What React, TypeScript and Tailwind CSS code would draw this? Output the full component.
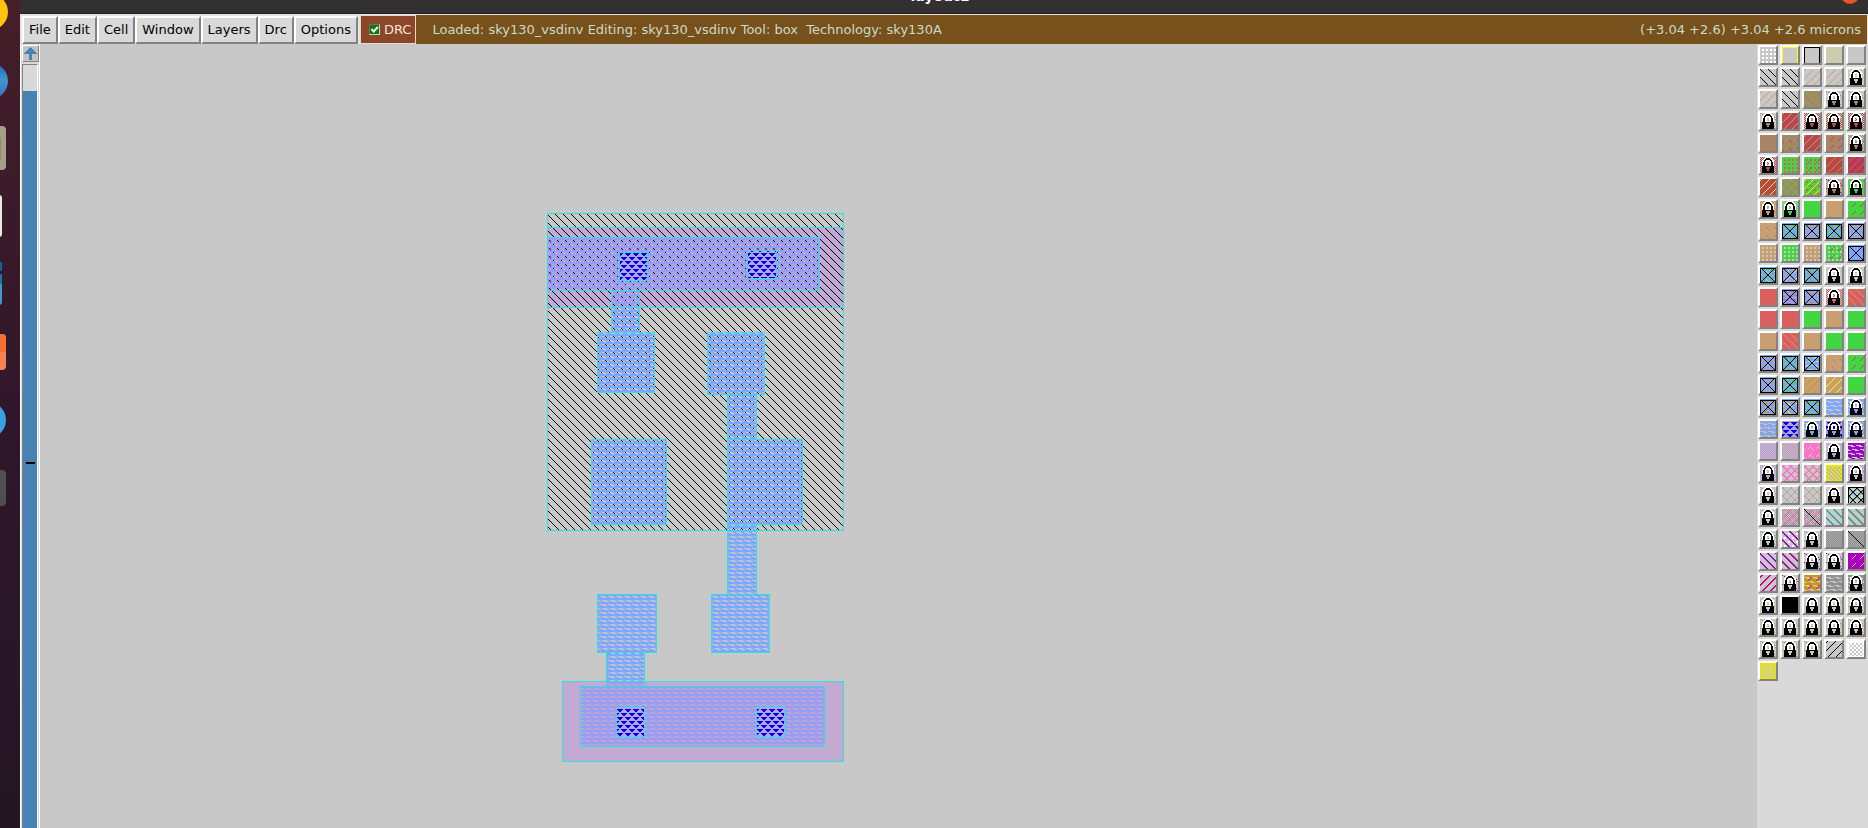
import React from "react";

type Layer = { kind: string; color: string };

const COLORS: Record<string, string> = {
  k: "#000000", w: "#ffffff", y: "#ffff00", Y: "#e6e600", t: "#c99e70", n: "#a98467",
  r: "#b8474f", c: "#dc5f5f", g: "#42d642", u: "#7da6ff", B: "#0000f5", m: "#cc0088",
  p: "#a000c8", l: "#b49edc", h: "#ff70c8", e: "#2aa8a0", G: "#919191", o: "#c8960a",
  a: "#c8c8c8", s: "#a8a8a8", q: "#cdb4c6",
};

// One row of the layer palette per line. Each token is a stipple kind and a colour;
// "L" puts a padlock over whatever came before it.
const PALETTE = `
Qw|Oy|Ok|DY|-
Dk|Dk|Ut|Ut|Ey Lk
Ut|Dk|Sn Dg|Eg En Ln|En Eg Ln
Eg En Ln|Sr Ut|Fr Lr|Fr Ey Lr|Fr Lr
Sn|Sn Vg Zr|Sr Ut|Sn Vr|Eg Fn Ln
Fr Lr|Sg Qc|Sg Qc Vr|Sr Uo|Sr Um
Sr Uy|Sn Dt Ug Dg|Sg Qc Uy|Fn Em Ln|Sg Et Lg
St Ea Lt|Fg Lg|Sg|St|Sg Vr
St Zn|Su Hg Xk|Su Ht Xk|Su Hg Zn Xk|Su Ht Xk
St Qa|Sg Qa|St Qa Zn|Sg Qa Vr|Su Xk
Su Hg Za Xk|Su Ht Va Xk|Su Hg Zc Xk|La|La
Sc|Su Hc Xk|Su Ht Zc Xk|Fc Lc|Sc Dt
Sc|Sc|Sg|St|Sg
St|Sc Dt|St|Sg|Sg
Su Ht Xk|Su Hg Xk|Su Ha Vg Xk|St Zn|Sg Vr
Su Ht Xk|Su Hg Vg Xk|St Uo|St Uy|Sg
Su Ht Vo Xk|Su Ht Zy Xk|Su Hg Xk|Su Ha|Su Ha Lu
Su Ha Dt|Sl TB|Su Ha Lu|Sl TB Lu|Su Ha Lu
Sq Fl|Sq Fl Dt|Sh Va Za|Fl Ll|Sp Ha
Fl Ll|Rh|Rh Dt|Fl PY|Fl Eh La
Eh La|Ws|Ws Dt|Fa La|Re Ok Wk
La|FG Wh|FG Wh Nk|Ke|Ke Jt
Ee La|Qw Kp|Ee La|Ss FG|Ss FG Nk
Kp|Kp Jt|Ep La|Ep La|Sp Qm Va
Mm|Em La|So Ha Vm|SG Ha|SG Ha La
EY La|Sk|La|Eo La|Eo La
Eo La|Eo La|Eo La|Eo La|Eo La
Eo La|Eo La|Eo La|Uk|Pw
PY`.trim().split("\n").map((row) =>
  row.split("|").map((cell): Layer[] =>
    cell === "-" ? [] : cell.split(" ").map((t) => ({ kind: t[0], color: t[1] })),
  ),
);

const PADLOCK = [
  ".....wwwwww.....",
  "....wwkkkkww....",
  "...wwkkkkkkww...",
  "..wwkkwwwwkkww..",
  "..wwkwwwwwwkww..",
  "..wkkww..wwkkw..",
  "..wkkww..wwkkw..",
  "..wkkww..wwkkw..",
  "..wkkwwwwwwkkw..",
  "..kkkkkkkkkkkk..",
  "..kkkk####kkkk..",
  "..kkkk####kkkk..",
  "..kkkkk##kkkkk..",
  "..kkkkk##kkkkk..",
  "..kkkkkkkkkkkk..",
  "..kkkkkkkkkkkk..",
];

function hit(kind: string, x: number, y: number): boolean {
  const d = (x - y + 64) & 7;
  const u = (x + y) & 7;
  switch (kind) {
    case "S": return true;
    case "D": return d === 0;
    case "J": return d === 1;
    case "K": return d === 0 || d === 7;
    case "U": return u === 1;
    case "M": return u === 1 || u === 2;
    case "N": return x === y;
    case "W": return d === 0 || u === 1;
    case "R": return d === 0 || d === 7 || u === 1 || u === 2;
    case "V": return u === 1 && (x & 7) > 3;
    case "Z": return d === 2 && (y & 7) > 3;
    case "F": return ((x + y) & 1) === 0;
    case "Q": return ((x + 2) & 3) < 2 && (y & 3) > 1;
    case "P": return x < 1 || y < 2 || x > 14 || y > 14 || (((x >> 1) + (y >> 1)) & 1) === 0;
    case "E": return (x * 7 + y * 11 + x * y) % 9 === 0;
    case "O": return y === 0 || x === 0 || x === 15;
    case "X": return y > 0 && (x < 1 || y < 2 || x > 14 || y > 14 || x === y || x + y === 15);
    case "H": return (y & 3) === 2 ? ((x + (y & 4)) & 7) < 5 : (y & 3) === 3 && ((x + (y & 4)) & 7) > 2 && ((x + (y & 4)) & 7) < 7;
    case "T": return triangle(x, y);
    default: return false;
  }
}

function triangle(x: number, y: number): boolean {
  const row = y & 3;
  if (row === 0) return false;
  const cx = (x + (y & 4)) & 7;
  return cx >= row && cx <= 7 - row;
}

function swatchPixels(layers: Layer[]): Record<string, string> {
  const grid: string[] = Array(256).fill("");
  for (const { kind, color } of layers) {
    for (let y = 0; y < 16; y++) {
      for (let x = 0; x < 16; x++) {
        if (kind === "L") {
          const p = PADLOCK[y][x];
          if (p === "w") grid[y * 16 + x] = COLORS.w;
          if (p === "k") grid[y * 16 + x] = COLORS.k;
          if (p === "#") grid[y * 16 + x] = color === "k" ? COLORS.a : COLORS[color];
        } else if (hit(kind, x, y)) {
          grid[y * 16 + x] = COLORS[color];
        }
      }
    }
  }
  const paths: Record<string, string> = {};
  grid.forEach((c, i) => {
    if (c) paths[c] = (paths[c] || "") + `M${i % 16} ${i >> 4}h1v1h-1z`;
  });
  return paths;
}

function Swatch({ layers, label }: { layers: Layer[]; label: string }) {
  return (
    <button
      type="button"
      aria-label={label}
      className="size-5 border-2 border-t-white border-l-white border-r-[#828282] border-b-[#828282] bg-[#c8c8c8]"
    >
      <svg width="16" height="16" viewBox="0 0 16 16" shapeRendering="crispEdges" className="block">
        {Object.entries(swatchPixels(layers)).map(([c, d]) => (
          <path key={c} d={d} fill={c} />
        ))}
      </svg>
    </button>
  );
}

function tilePath(test: (x: number, y: number) => boolean): string {
  let d = "";
  for (let y = 0; y < 8; y++) for (let x = 0; x < 8; x++) if (test(x, y)) d += `M${x} ${y}h1v1h-1z`;
  return d;
}

const wellTile = tilePath((x, y) => ((y - x + 8) & 7) === 3);
const checkTile = tilePath((x, y) => ((x + y) & 1) === 0);
const gapRows: Record<number, number[]> = { 0: [2, 3, 4, 5, 6], 1: [5, 6, 7, 0], 4: [0, 1, 2, 3, 4], 5: [3, 4, 5, 6] };
const metalTile = tilePath((x, y) => !(gapRows[y] || []).includes(x));
const contactTile = tilePath((x, y) => triangle(x, (y + 4) & 7));

function Tile({ id, d, fill, back }: { id: string; d: string; fill: string; back?: string }) {
  return (
    <pattern id={id} width="8" height="8" patternUnits="userSpaceOnUse">
      {back && <rect width="8" height="8" fill={back} />}
      <path d={d} fill={fill} />
    </pattern>
  );
}

// Left, top, right and bottom pixel of each box.
type Box = [number, number, number, number];

function Fill({ box: [l, t, r, b], id }: { box: Box; id: string }) {
  return <rect x={l} y={t} width={r - l + 1} height={b - t + 1} fill={`url(#${id})`} />;
}

function outline([l, t, r, b]: Box) {
  return `M${l} ${t}h${r - l + 1}v${b - t + 1}h${l - r - 1}zM${l + 1} ${t + 1}v${b - t - 1}h${r - l - 1}v${t - b + 1}z`;
}

const WELL: Box = [547, 213, 843, 530];
const DIFF: Box[] = [[547, 227, 843, 307], [562, 681, 843, 761]];
const METAL: Box[] = [
  [611, 307, 639, 332], [597, 332, 654, 392], [707, 332, 764, 394], [727, 394, 756, 439],
  [591, 439, 666, 524], [727, 439, 802, 524], [727, 524, 756, 594], [597, 594, 656, 652],
  [711, 594, 769, 652], [606, 652, 644, 680],
];
const METAL_ON_DIFF: Box[] = [[547, 237, 819, 290], [611, 290, 639, 307], [606, 681, 644, 686], [580, 686, 824, 746]];
const CONTACT: Box[] = [[619, 252, 647, 280], [747, 250, 776, 278], [616, 707, 644, 736], [756, 707, 784, 736]];
const EDGES: Box[] = [
  WELL, ...DIFF, ...METAL.slice(1, 9), [611, 290, 639, 332], [606, 652, 644, 686],
  METAL_ON_DIFF[0], METAL_ON_DIFF[3], ...CONTACT,
];

function Layout() {
  return (
    <svg width="860" height="740" shapeRendering="crispEdges" className="block shrink-0">
      <defs>
        <Tile id="well" d={wellTile} fill="#000000" />
        <Tile id="diff" d={checkTile} fill="#b89fdd" back="#cdb4c6" />
        <Tile id="metal" d={metalTile} fill="#7da6ff" />
        <Tile id="mixed" d={metalTile} fill="#989df4" />
        <Tile id="contact" d={contactTile} fill="#0000f5" back="#b3a5dd" />
      </defs>
      <g transform="translate(-40 -44)">
        {DIFF.map((b, i) => <Fill key={i} box={b} id="diff" />)}
        <Fill box={WELL} id="well" />
        {METAL.map((b, i) => <Fill key={i} box={b} id="metal" />)}
        {METAL_ON_DIFF.map((b, i) => <Fill key={i} box={b} id="mixed" />)}
        {CONTACT.map((b, i) => <Fill key={i} box={b} id="contact" />)}
        {EDGES.map((b, i) => <path key={i} d={outline(b)} fill="#2ee0e0" fillRule="evenodd" />)}
      </g>
    </svg>
  );
}

function Launcher() {
  return (
    <aside className="w-5 shrink-0 overflow-hidden bg-linear-to-b from-[#451e28] via-[#2f172b] to-[#231522]">
      <svg width="20" height="520" className="block">
        <defs>
          <linearGradient id="globe" x1="0" y1="0" x2="0" y2="1">
            <stop offset="0" stopColor="#1f62b8" />
            <stop offset=".45" stopColor="#3f97cf" />
            <stop offset="1" stopColor="#3a6fc0" />
          </linearGradient>
        </defs>
        <circle cx="-10" cy="12" r="18" fill="#ffc20e" />
        <circle cx="-10" cy="81" r="18" fill="url(#globe)" />
        <rect x="-20" y="126" width="26" height="44" rx="4" fill="#a59e88" />
        <rect x="-20" y="138" width="21" height="22" fill="#8f8975" />
        <rect x="-20" y="195" width="22" height="42" rx="3" fill="#eeeae0" />
        <rect x="-20" y="262" width="22" height="9" rx="1" fill="#11699a" />
        <rect x="-20" y="274" width="22" height="31" rx="3" fill="#3c9cc8" />
        <path d="M0 274h1q1 0 1 2v8H0z" fill="#1277a8" />
        <rect x="-20" y="334" width="26" height="36" rx="4" fill="#f58352" />
        <path d="M0 334h2q4 0 4 4v14H0z" fill="#f46f30" />
        <circle cx="-12" cy="420" r="18" fill="#3aa0e6" />
        <rect x="-20" y="470" width="26" height="36" rx="4" fill="#4f4f4f" />
      </svg>
    </aside>
  );
}

const MENUS = ["File", "Edit", "Cell", "Window", "Layers", "Drc", "Options"];

export default function App() {
  return (
    <div className="flex h-screen overflow-hidden bg-[#c8c8c8] text-[13px] leading-4" style={{ fontFamily: '"DejaVu Sans", sans-serif' }}>
      <Launcher />
      <div className="flex min-w-0 flex-1 flex-col">
        <header className="flex h-3.5 shrink-0 items-start justify-between overflow-hidden border-b border-[#1f2020] bg-[#333031] pr-2">
          <span className="w-5" />
          <h1 className="-mt-3 text-sm leading-4 font-bold text-white">layout1</h1>
          <svg width="20" height="5" className="block">
            <circle cx="10" cy="-5" r="9" fill="#e95420" />
          </svg>
        </header>

        <div className="flex h-[30px] shrink-0 border-t border-[#e4e4e4] bg-[#e4e4e4]">
          <nav className="flex pt-px pr-0.5 pl-0.5">
            {MENUS.map((m) => (
              <button
                key={m}
                type="button"
                className="border-2 border-t-white border-l-white border-r-[#828282] border-b-[#828282] bg-[#d9d9d9] px-[5px] text-black"
              >
                {m}
              </button>
            ))}
          </nav>
          <label className="flex items-center gap-1 border border-[#e4d8d0] bg-[#8c4628] pr-1 pl-2 text-[#f6e6dc]">
            <span className="relative block size-[11px]">
              <input type="checkbox" defaultChecked className="block size-[11px] appearance-none border border-t-[#6f6f6f] border-r-[#d0d0d0] border-b-[#d0d0d0] border-l-[#6f6f6f] bg-[#007f00]" />
              <svg width="11" height="11" className="pointer-events-none absolute inset-0">
                <path d="M2.500 5l2.200 2.600L8.800 3" fill="none" stroke="#ffffff" strokeWidth="2" />
              </svg>
            </span>
            DRC
          </label>
          <div className="mr-px flex min-w-0 flex-1 items-center justify-between bg-[#78501c] pr-1.5 pl-4 whitespace-pre text-[#c9dcc8]">
            <span>{"Loaded: sky130_vsdinv Editing: sky130_vsdinv Tool: box  Technology: sky130A"}</span>
            <span>(+3.04 +2.6) +3.04 +2.6 microns</span>
          </div>
        </div>

        <main className="flex min-h-0 flex-1">
          <div className="flex w-5 shrink-0 flex-col border-r border-l border-white bg-[#d9d9d9] pl-px">
            <button
              type="button"
              aria-label="Scroll up"
              className="mt-px flex h-[17px] w-[17px] shrink-0 items-center justify-center border border-t-white border-r-[#828282] border-b-[#828282] border-l-white bg-[#c3c3c3]"
            >
              <svg width="13" height="13" viewBox="0 0 13 13" shapeRendering="crispEdges">
                <path d="M6.500 0L13 7H8v6H5V7H0z" fill="#4682b4" />
              </svg>
            </button>
            <div className="mt-0.5 mr-px flex flex-1 flex-col border-t border-r border-l border-t-[#828282] border-r-white border-l-[#828282] pt-[26px]">
              <div className="flex flex-1 flex-col items-center justify-center bg-[#4682b4] pt-1.5">
                <span className="h-0.5 w-[9px] bg-black" />
              </div>
            </div>
          </div>

          <section className="min-w-0 flex-1 overflow-hidden bg-[#c8c8c8]">
            <Layout />
          </section>

          <aside className="shrink-0 bg-[#d9d9d9] pt-px pr-0.5 pl-px">
            <div className="grid grid-cols-5 gap-0.5">
              {PALETTE.flat().map((layers, i) => (
                <Swatch key={i} layers={layers} label={`Layer ${i + 1}`} />
              ))}
            </div>
          </aside>
        </main>
      </div>
    </div>
  );
}
